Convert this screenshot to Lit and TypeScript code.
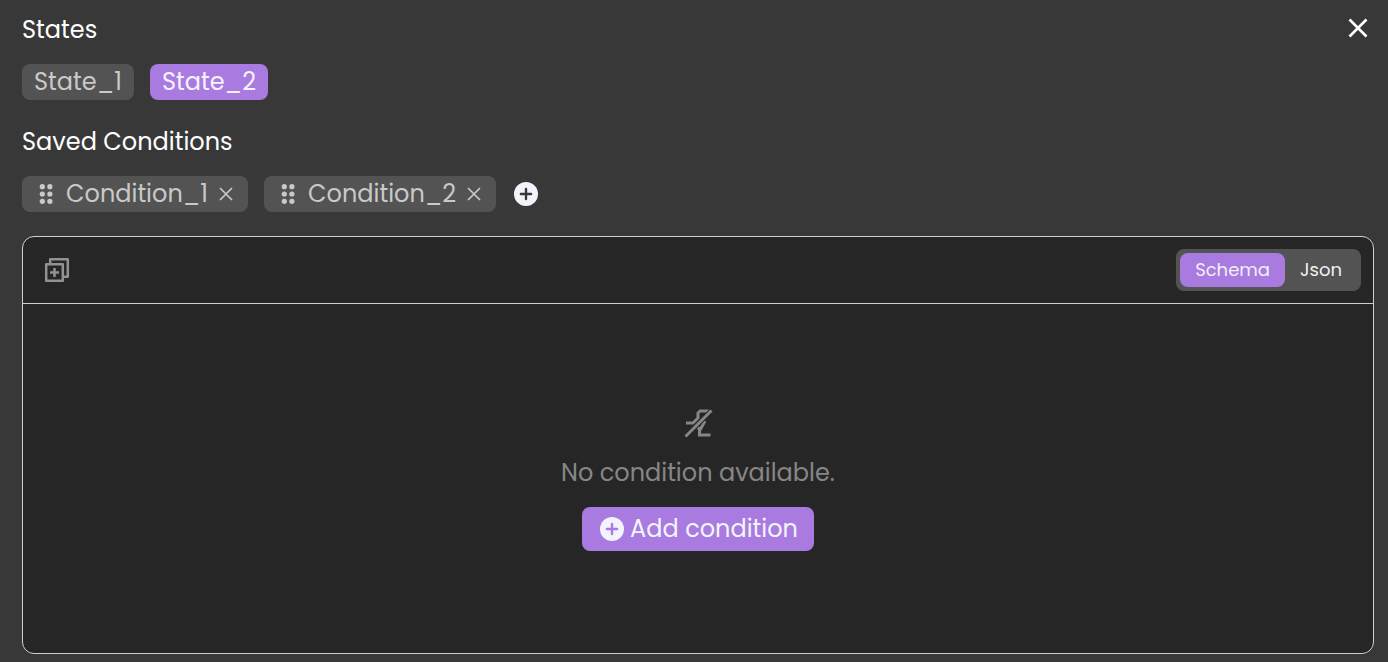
import { LitElement, html, css, svg } from "lit";
import { customElement, state } from "lit/decorators.js";

const plusCircle = (cls: string) => html`<svg class="plus ${cls}" viewBox="0 0 24 24" aria-hidden="true">
  <circle class="disc" cx="12" cy="12" r="12" />
  <path class="cross" d="M12 6.9v10.2M6.9 12h10.2" />
</svg>`;

const grip = html`<svg class="grip" viewBox="0 0 14 20" aria-hidden="true">
  ${[2.7, 10, 17.3].map((y) => svg`<circle cx="3.300" cy=${y} r="2.6" /><circle cx="10.900" cy=${y} r="2.6" />`)}
</svg>`;

@customElement("app-root")
export class AppRoot extends LitElement {
  @state() private states = ["State_1", "State_2"];
  @state() private active = "State_2";
  @state() private conditions = ["Condition_1", "Condition_2"];
  @state() private view = "Schema";

  static styles = css`
    :host {
      display: flex;
      flex-direction: column;
      box-sizing: border-box;
      min-height: 100vh;
      padding: 12px 14px 8px 22px;
      background: #383838;
      color: #fff;
      font: 400 24px/36px Poppins, Inter, sans-serif;
    }
    button {
      margin: 0;
      padding: 0;
      border: 0;
      background: none;
      color: inherit;
      font: inherit;
      cursor: pointer;
    }
    svg {
      display: block;
      flex: none;
    }
    header {
      display: flex;
      justify-content: space-between;
      align-items: center;
    }
    h2 {
      margin: 0;
      font: inherit;
    }
    .close {
      padding: 0 6px 4px 0;
    }
    .close svg {
      width: 20px;
      height: 20px;
      stroke: #fff;
      stroke-width: 2.6;
    }
    .row {
      display: flex;
      align-items: center;
      gap: 16px;
      margin: 16px 0 24px;
    }
    .chip {
      display: flex;
      align-items: center;
      box-sizing: border-box;
      height: 36px;
      padding: 0 12px;
      border-radius: 8px;
      background: #535353;
      color: #c9c9c9;
    }
    .chip.on {
      background: #a97ae0;
      color: #f3f4fb;
    }
    .condition {
      padding: 0 13px 0 17px;
    }
    .grip {
      width: 14px;
      height: 20px;
      margin-right: 13px;
      fill: #c9c9c9;
    }
    .remove {
      padding: 2px;
      margin-left: 9px;
    }
    .remove svg {
      width: 14px;
      height: 14px;
      stroke: #c9c9c9;
      stroke-width: 1.7;
    }
    .plus {
      width: 24px;
      height: 24px;
    }
    .add {
      margin-left: 2px;
    }
    .disc {
      fill: #f3f4fb;
    }
    .cross {
      fill: none;
      stroke: #383838;
      stroke-width: 2.4;
      stroke-linecap: round;
    }
    .on-accent .cross {
      stroke: #a97ae0;
    }
    .panel {
      flex: 1;
      display: flex;
      flex-direction: column;
      border: 1px solid #cfcfcf;
      border-radius: 12px;
      background: #262626;
    }
    .toolbar {
      display: flex;
      justify-content: space-between;
      align-items: center;
      padding: 12px 12px 12px 20px;
      border-bottom: 1px solid #cfcfcf;
    }
    .copy svg {
      width: 28px;
      height: 28px;
      fill: none;
      stroke: #929292;
      stroke-width: 2.5;
      stroke-linejoin: round;
    }
    .tabs {
      display: flex;
      padding: 4px;
      border-radius: 8px;
      background: #535353;
      font-size: 18px;
      line-height: 34px;
      color: #f0f0f4;
    }
    .tab {
      padding: 0 15px;
      border-radius: 8px;
    }
    .tab.on {
      background: #a97ae0;
    }
    .empty {
      flex: 1;
      display: flex;
      flex-direction: column;
      align-items: center;
      justify-content: center;
      gap: 16px;
      color: #868686;
    }
    .empty p {
      margin: 0;
    }
    .none {
      width: 32px;
      height: 32px;
      fill: none;
      stroke: #868686;
      stroke-width: 3;
    }
    .none .gap {
      stroke: #262626;
      stroke-width: 5;
    }
    .primary {
      display: flex;
      align-items: center;
      gap: 6px;
      padding: 4px 16px 4px 18px;
      border-radius: 8px;
      background: #a97ae0;
      color: #f3f4fb;
    }
  `;

  render() {
    return html`
      <header>
        <h2>States</h2>
        <button class="close" aria-label="Close">
          <svg viewBox="0 0 20 20"><path d="M1.5 1.5l17 17M18.5 1.5l-17 17" /></svg>
        </button>
      </header>
      <div class="row">
        ${this.states.map(
          (s) => html`<button class="chip ${s === this.active ? "on" : ""}" @click=${() => (this.active = s)}>${s}</button>`
        )}
      </div>
      <h2>Saved Conditions</h2>
      <div class="row">
        ${this.conditions.map(
          (c) => html`<div class="chip condition">
            ${grip}<span>${c}</span>
            <button
              class="remove"
              aria-label="Remove ${c}"
              @click=${() => (this.conditions = this.conditions.filter((x) => x !== c))}
            >
              <svg viewBox="0 0 14 14"><path d="M1 1l12 12M13 1L1 13" /></svg>
            </button>
          </div>`
        )}
        <button class="add" aria-label="Add saved condition">${plusCircle("")}</button>
      </div>
      <section class="panel">
        <div class="toolbar">
          <button class="copy" aria-label="Add group">
            <svg viewBox="0 0 28 28">
              <path d="M3.2 8.2h16.6v16.6H3.2zM7.2 8V3.2h17.6v17.6H20M11.5 12v9M7 16.5h9" />
            </svg>
          </button>
          <div class="tabs">
            ${["Schema", "Json"].map(
              (v) => html`<button class="tab ${v === this.view ? "on" : ""}" @click=${() => (this.view = v)}>${v}</button>`
            )}
          </div>
        </div>
        <div class="empty">
          <svg class="none" viewBox="0 0 32 32" aria-hidden="true">
            <path d="M4 16h7l5-5V6l2-2h9" />
            <path d="M14.500 18.500L18 23L23 14M17.500 20V28H28.500" />
            <path class="gap" d="M4 31L31 4" transform="translate(-1 -1)" />
            <path d="M3.500 29.500L29.500 3.500" />
          </svg>
          <p>No condition available.</p>
          <button class="primary">${plusCircle("on-accent")}<span>Add condition</span></button>
        </div>
      </section>
    `;
  }
}
